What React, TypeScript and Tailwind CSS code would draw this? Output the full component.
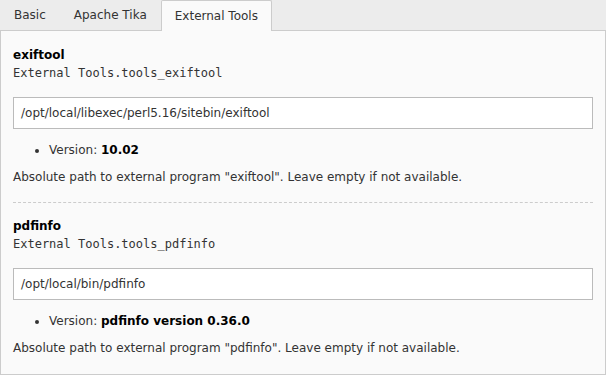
import React from "react";

const sans = { fontFamily: '"DejaVu Sans", Verdana, sans-serif' };

function Tool({ name, id, path, version, last }: { name: string; id: string; path: string; version: React.ReactNode; last?: boolean }) {
  return (
    <div className={last ? "pt-[14px]" : "pb-[16px] border-b border-dashed border-[#cccccc]"}>
      <div className="text-[12px] font-bold leading-[18px] text-[#000]">{name}</div>
      <div className="text-[12px] leading-[18px] text-[#333]" style={{ fontFamily: '"DejaVu Sans Mono", monospace' }}>
        {id}
      </div>
      <div className="mt-[15px] h-[32px] border border-[#bbbbbb] bg-white px-[7px] flex items-center text-[12px] text-[#333]">
        {path}
      </div>
      <ul className="mt-[12px] pl-[36px] list-disc text-[12px] leading-[18px] text-[#333]">
        <li>Version: <b className="text-[#000]">{version}</b></li>
      </ul>
      <div className="mt-[9px] text-[12px] leading-[18px] text-[#333]">
        Absolute path to external program "{name}". Leave empty if not available.
      </div>
    </div>
  );
}

export default function App() {
  return (
    <div className="w-[606px] h-[375px] bg-[#ececec] text-[12px]" style={sans}>
      <div className="h-[31px] flex items-end border-b border-[#cccccc] relative">
        <div className="flex items-end h-full">
          <div className="px-[13px] h-[30px] flex items-center border border-transparent text-[#333]">Basic</div>
          <div className="px-[13px] h-[30px] flex items-center border border-transparent text-[#333]">Apache Tika</div>
          <div className="px-[13px] h-[31px] mb-[-1px] flex items-center bg-[#fafafa] border border-b-0 border-[#cccccc] rounded-t-[2px] text-[#333]">
            External Tools
          </div>
        </div>
      </div>
      <div className="h-[344px] bg-[#fafafa] border border-t-0 border-[#cccccc] px-[12px] pt-[15px]">
        <Tool name="exiftool" id="External Tools.tools_exiftool" path="/opt/local/libexec/perl5.16/sitebin/exiftool" version="10.02" />
        <Tool name="pdfinfo" id="External Tools.tools_pdfinfo" path="/opt/local/bin/pdfinfo" version="pdfinfo version 0.36.0" last />
      </div>
    </div>
  );
}
